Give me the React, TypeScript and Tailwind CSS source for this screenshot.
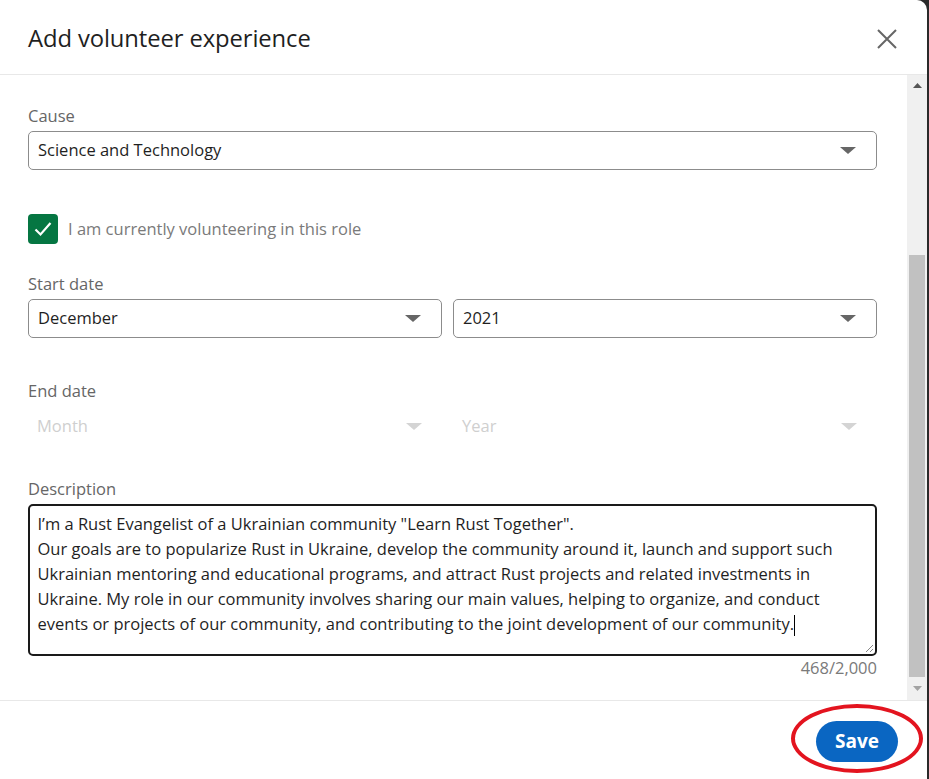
import React from 'react';

const font = { fontFamily: '"Open Sans", "Noto Sans", sans-serif' };

function Caret({ light }: { light?: boolean }) {
    return (
        <svg width="16" height="7" viewBox="0 0 16 7" className="shrink-0">
            <path d="M0 0 H16 L8 7 Z" fill={light ? '#d4d4d4' : '#666666'} />
        </svg>
    );
}

function SelectBox({ value, className = '' }: { value: string; className?: string }) {
    return (
        <div className={`h-[39px] flex items-center justify-between pl-[9px] pr-[20px] border border-[#8c8c8c] rounded-[5px] bg-white ${className}`}>
            <span className="text-[16.5px] text-[#1f1f1f]">{value}</span>
            <Caret />
        </div>
    );
}

function DisabledSelect({ value, className = '' }: { value: string; className?: string }) {
    return (
        <div className={`h-[40px] flex items-center justify-between pl-[9px] pr-[20px] ${className}`}>
            <span className="text-[16.5px] text-[#cfcfcf]">{value}</span>
            <Caret light />
        </div>
    );
}

function Label({ children }: { children: React.ReactNode }) {
    return <div className="text-[16.5px] leading-[20px] text-[#666666] mb-[5px]">{children}</div>;
}

const descLines = [
    'I’m a Rust Evangelist of a Ukrainian community "Learn Rust Together".',
    'Our goals are to popularize Rust in Ukraine, develop the community around it, launch and support such',
    'Ukrainian mentoring and educational programs, and attract Rust projects and related investments in',
    'Ukraine. My role in our community involves sharing our main values, helping to organize, and conduct',
    'events or projects of our community, and contributing to the joint development of our community.',
];

export default function App() {
    return (
        <div className="w-[929px] h-[779px] bg-[#2a2a2a] overflow-hidden" style={font}>
            <div className="relative w-[927px] h-[779px] bg-white rounded-tr-[10px] flex flex-col">
                {/* header */}
                <div className="h-[75px] shrink-0 flex items-center justify-between pl-[28px] pr-[30px] pt-[3px] border-b border-[#e8e8e8]">
                    <h1 className="text-[23.8px] font-normal text-[#1f1f1f] tracking-[-0.1px]">Add volunteer experience</h1>
                    <svg width="20" height="20" viewBox="0 0 20 20">
                        <path d="M1 1 L19 19 M19 1 L1 19" stroke="#666666" strokeWidth="2" />
                    </svg>
                </div>

                {/* body */}
                <div className="h-[625px] shrink-0 flex">
                    <div className="flex-1 pl-[28px] pr-[30px] pt-[31px]">
                        <Label>Cause</Label>
                        <SelectBox value="Science and Technology" />

                        <div className="mt-[44px] flex items-center gap-[10px] h-[30px]">
                            <div className="w-[30px] h-[30px] rounded-[4px] bg-[#057642] flex items-center justify-center">
                                <svg width="18" height="16" viewBox="0 0 18 16">
                                    <path d="M1.5 8.5 L6.5 13.5 L16.5 2" stroke="white" strokeWidth="2.2" fill="none" />
                                </svg>
                            </div>
                            <span className="text-[16.5px] text-[#7a7a7a]">I am currently volunteering in this role</span>
                        </div>

                        <div className="mt-[30px]">
                            <Label>Start date</Label>
                            <div className="flex gap-[11px]">
                                <SelectBox value="December" className="w-[414px]" />
                                <SelectBox value="2021" className="flex-1" />
                            </div>
                        </div>

                        <div className="mt-[43px]">
                            <Label>End date</Label>
                            <div className="flex gap-[11px]">
                                <DisabledSelect value="Month" className="w-[414px]" />
                                <DisabledSelect value="Year" className="flex-1" />
                            </div>
                        </div>

                        <div className="mt-[33px]">
                            <Label>Description</Label>
                            <div className="relative h-[152px] border-[2.5px] border-[#1a1a1a] rounded-[5px] pl-[7.5px] pt-[5px] text-[16.5px] leading-[25px] text-[#1f1f1f]">
                                {descLines.map((l, i) => (
                                    <div key={i} className="whitespace-nowrap">
                                        {l}
                                        {i === descLines.length - 1 && (
                                            <span className="inline-block w-[1px] h-[21px] bg-black align-middle" />
                                        )}
                                    </div>
                                ))}
                                <svg width="9" height="9" viewBox="0 0 9 9" className="absolute right-[1px] bottom-[1px]">
                                    <path d="M8 1 L1 8 M8 5 L5 8" stroke="#888888" strokeWidth="1" />
                                </svg>
                            </div>
                            <div className="mt-[2px] text-right text-[16.5px] leading-[20px] text-[#7a7a7a]">468/2,000</div>
                        </div>
                    </div>

                    {/* scrollbar */}
                    <div className="w-[20px] shrink-0 bg-[#f0f0f0] flex flex-col items-center">
                        <div className="h-[20px] flex items-center justify-center">
                            <svg width="9" height="5" viewBox="0 0 9 5"><path d="M0 5 H9 L4.5 0 Z" fill="#555555" /></svg>
                        </div>
                        <div className="h-[160px]" />
                        <div className="w-[16px] h-[422px] bg-[#c1c1c1]" />
                        <div className="flex-1 flex items-center justify-center">
                            <svg width="9" height="5" viewBox="0 0 9 5"><path d="M0 0 H9 L4.5 5 Z" fill="#a3a3a3" /></svg>
                        </div>
                    </div>
                </div>

                {/* footer */}
                <div className="flex-1 border-t border-[#e8e8e8] flex items-center justify-end pr-[29px] pt-[3px]">
                    <button className="w-[82px] h-[41px] rounded-full bg-[#0a66c2] text-white text-[19px] font-bold">Save</button>
                </div>

                {/* annotation */}
                <div className="absolute left-[791px] top-[704px] w-[132px] h-[69px] rounded-[50%] border-[4px] border-[#e3141f]" />
            </div>
        </div>
    );
}
